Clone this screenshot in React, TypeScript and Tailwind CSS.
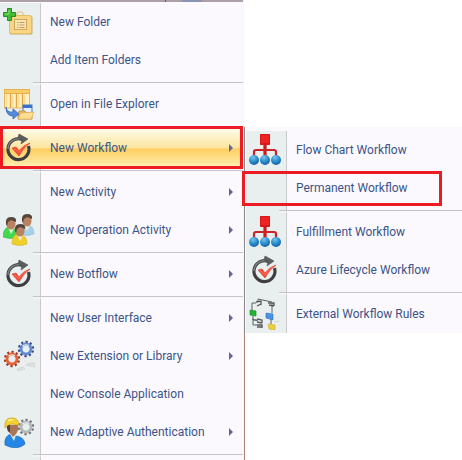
import type { ReactNode } from 'react';

type Item = {
  label: string;
  icon?: ReactNode;
  arrow?: boolean;
  active?: boolean;
  marked?: boolean;
};

type Entry = Item | 'separator';

function Icon({ children }: { children: ReactNode }) {
  return (
    <svg viewBox="0 0 32 32" className="size-8" aria-hidden="true">
      {children}
    </svg>
  );
}

function FolderAddIcon() {
  return (
    <Icon>
      <path d="M14 11V8q0-2 2-2h2q2 0 2 2v3" fill="none" stroke="#e3cfa0" strokeWidth="1.500" />
      <rect x="6.500" y="10" width="23" height="18.500" rx="1.500" fill="#c9a868" />
      <rect x="6.500" y="9.500" width="22" height="18" rx="1.500" fill="#f8d684" stroke="#e6bd68" />
      <rect x="11.500" y="13.500" width="12" height="10" fill="#fbe6b0" stroke="#cfa564" />
      <path d="M14 16.500h1.500m1 0h5m-7.500 2.500h1.500m1 0h5m-7.500 2.500h1.500m1 0h5" stroke="#c09a66" strokeWidth="1" />
      <path d="M4.500 2.500h4v4h4v4h-4v4h-4v-4h-4v-4h4z" fill="#43bb35" stroke="#1f8f2a" />
      <path d="M6 4v4H2" fill="none" stroke="#8add74" strokeWidth="1" />
    </Icon>
  );
}

function ExplorerIcon() {
  return (
    <Icon>
      <rect x="1.500" y="1.500" width="25" height="18.500" fill="#fff0c9" stroke="#e6b861" />
      <rect x="1.500" y="1.500" width="25" height="4" fill="#f9cc67" stroke="#e6b04d" />
      <path d="M7.500 6v14m6-14v14m6-14v14" stroke="#dda647" strokeWidth="1.300" />
      <path d="M3.500 6v13m6-13v13m6-13v13m6-13v13" stroke="#fbdc91" strokeWidth="1.500" />
      <rect x="20" y="17" width="9" height="8" fill="#e6f0ff" stroke="#447bc2" />
      <path d="M20 18.500h9" stroke="#3674cc" strokeWidth="3" />
      <path d="M16 23h6l1 2h6v6H15z" fill="#f3bb5c" stroke="#c99143" />
      <path d="m18 25 13-1-3 7H15z" fill="#ffdd91" stroke="#e0ad59" strokeWidth=".700" />
      <path d="M3 19q1 6 7 5v-3l6 5-6 5v-3Q3 28 3 19z" fill="#568bd9" stroke="#3165b2" strokeWidth=".800" />
    </Icon>
  );
}

function CycleIcon() {
  return (
    <Icon>
      <path d="M21.500 8.500A10.500 10.500 0 1 0 25.500 14" fill="none" stroke="#3d3f43" strokeWidth="3.200" />
      <path d="M17.500 6.800A10.500 10.500 0 0 0 5 17" fill="none" stroke="#8a8e90" strokeWidth="1.200" />
      <path d="m16 2 9 5-7 5 1-4-4-2z" fill="#5a5f5e" stroke="#4d5253" strokeWidth=".600" />
      <path d="m9 16 4-1 3 4q4-6 11-8-7 5-11 13z" fill="#f34b37" stroke="#d63a2d" strokeWidth=".600" />
      <path d="m11 16.500 5 4q3-6 8-8" fill="none" stroke="#ff826b" strokeWidth=".700" />
    </Icon>
  );
}

function Person({ x, y, color, dark }: { x: number; y: number; color: string; dark: string }) {
  return (
    <g transform={`translate(${x} ${y})`}>
      <path d="M0 20q0-8 5-10l4 1q6 1 6 9-7 3-15 0z" fill={color} stroke={dark} strokeWidth=".600" />
      <path d="m5 10 3 7 3-6-3-2z" fill="#f3eee4" />
      <ellipse cx="8" cy="7" rx="4.500" ry="5.500" fill="#b98260" />
      <path d="M3 7Q2 0 8 0q6 0 5 5l-5-2-3 2-1 4z" fill="#54463c" />
    </g>
  );
}

function PeopleIcon() {
  return (
    <Icon>
      <Person x={16} y={0} color="#a6d2e9" dark="#8fbcd4" />
      <Person x={0} y={3} color="#42d94f" dark="#35bd43" />
      <Person x={9} y={10} color="#f0ce27" dark="#d8b322" />
    </Icon>
  );
}

function Gear({ x, y, color, dark }: { x: number; y: number; color: string; dark: string }) {
  return (
    <g transform={`translate(${x} ${y}) rotate(12)`}>
      <circle r="7" fill="none" stroke={dark} strokeWidth="2.400" strokeDasharray="2.200 2.198" />
      <circle r="5" fill="none" stroke={color} strokeWidth="2.800" />
      <path d="M-4-2Q-2-5 2-4" fill="none" stroke="#edf3fa" strokeWidth="1.200" />
    </g>
  );
}

function GearsIcon() {
  return (
    <Icon>
      <path d="m14 29 6-2 2 2-7 2zm9-4 4-2h5v4z" fill="#e2e2e0" stroke="#c9cacb" strokeWidth=".600" />
      <Gear x={23} y={9} color="#648bd1" dark="#3c4b83" />
      <Gear x={9} y={19} color="#e66132" dark="#9b3932" />
    </Icon>
  );
}

function WorkerIcon() {
  return (
    <Icon>
      <Gear x={23} y={11} color="#b3b7b7" dark="#6d7173" />
      <path d="M2 29q-1-9 6-11l5 2q8 1 9 8-8 7-20 1z" fill="#2587e5" stroke="#1765bd" strokeWidth=".700" />
      <path d="m7 18 4 7 2-6z" fill="#ddecf9" />
      <path d="M6 9h9q1 5-2 9l-3 3-3-4z" fill="#ac7655" />
      <path d="M4 9h3v8q-4-3-3-8z" fill="#50402f" />
      <path d="M2 12Q1 2 8 2q7-1 8 7l-7-1q-4 0-7 4z" fill="#f4d12e" stroke="#caa21d" strokeWidth=".700" />
      <path d="M5 5q2-2 5-1" fill="none" stroke="#fff18e" strokeWidth="1.500" />
    </Icon>
  );
}

function ChartIcon() {
  return (
    <Icon>
      <defs>
        <radialGradient id="node" cx=".4" cy=".25" r=".8">
          <stop stopColor="#78c5ed" />
          <stop offset=".55" stopColor="#298bc9" />
          <stop offset="1" stopColor="#125b9e" />
        </radialGradient>
      </defs>
      <path d="M16 9v14" stroke="#d0181d" strokeWidth="3.200" />
      <path d="M5 24v-6q0-2 2-2h18q2 0 2 2v6" fill="none" stroke="#c8242a" strokeWidth="2.200" />
      <rect x="11" y="0" width="10" height="11" rx=".700" fill="#d5161b" />
      <rect x="12" y="1" width="8" height="8" fill="#ef241f" />
      <circle cx="5" cy="26" r="5" fill="url(#node)" />
      <circle cx="16" cy="26" r="5" fill="url(#node)" />
      <circle cx="27" cy="26" r="5" fill="url(#node)" />
    </Icon>
  );
}

function RulesIcon() {
  return (
    <Icon>
      <path d="M3 14V5h4M9 3V1l14 3M4 18v9h4m-4-5h4m15-17v10m-1 5v6M3 21l6 2" fill="none" stroke="#5d6367" strokeWidth="1" />
      <path d="m7 4 5-1v4M8 8l4-2m7-1 6 0v3m-5-1 5 1M8 21l5 1v3m-5-1 5 1M8 27h5v3m-5-1h5" fill="none" stroke="#53585b" strokeWidth="1.300" />
      <path d="m1 12 6 1v5l-6-1z" fill="#20b635" stroke="#1b842c" strokeWidth=".600" />
      <path d="m17 15 7 1v6l-7-2z" fill="#4b91e5" stroke="#2d71bd" strokeWidth=".600" />
      <path d="m19 26 7 1v5l-6-1z" fill="#efcd36" stroke="#cfae33" strokeWidth=".600" />
      <path d="m25 24 5-1" stroke="#d2d5d6" />
    </Icon>
  );
}

const mainMenu: Entry[] = [
  { label: 'New Folder', icon: <FolderAddIcon /> },
  { label: 'Add Item Folders' },
  'separator',
  { label: 'Open in File Explorer', icon: <ExplorerIcon /> },
  'separator',
  { label: 'New Workflow', icon: <CycleIcon />, arrow: true, active: true },
  'separator',
  { label: 'New Activity', arrow: true },
  { label: 'New Operation Activity', icon: <PeopleIcon />, arrow: true },
  'separator',
  { label: 'New Botflow', icon: <CycleIcon />, arrow: true },
  'separator',
  { label: 'New User Interface', arrow: true },
  { label: 'New Extension or Library', icon: <GearsIcon />, arrow: true },
  { label: 'New Console Application' },
  { label: 'New Adaptive Authentication', icon: <WorkerIcon />, arrow: true },
  'separator',
];

const workflowMenu: Entry[] = [
  { label: 'Flow Chart Workflow', icon: <ChartIcon /> },
  { label: 'Permanent Workflow', marked: true },
  'separator',
  { label: 'Fulfillment Workflow', icon: <ChartIcon /> },
  { label: 'Azure Lifecycle Workflow', icon: <CycleIcon /> },
  'separator',
  { label: 'External Workflow Rules', icon: <RulesIcon /> },
];

function Separator() {
  return (
    <li role="separator" className="flex h-1.5 shrink-0">
      <span className="w-[33px] bg-[#e9eeef]" />
      <span className="flex flex-1 flex-col">
        <span className="h-[3px] w-2 border-r border-[#c9c9cc] bg-[#e9eeef]" />
        <span className="h-px bg-[#c6c4c9]" />
        <span className="h-0.5 w-2 border-r border-[#dddde0] bg-[#f3f4f6]" />
      </span>
    </li>
  );
}

function MenuItem({ item }: { item: Item }) {
  return (
    <li className="relative shrink-0">
      <button
        type="button"
        role="menuitem"
        aria-haspopup={item.arrow ? 'menu' : undefined}
        aria-expanded={item.arrow ? Boolean(item.active) : undefined}
        className={
          item.active
            ? 'flex h-[38px] w-full items-center bg-[linear-gradient(#fffbe6,#fce5a0_50%,#fdcf62_52%,#fedd84_75%,#fff0b4)] text-left'
            : 'flex h-[38px] w-full items-center text-left'
        }
      >
        <span
          className={
            item.active
              ? 'flex h-full w-[41px] items-center pl-[3px]'
              : 'flex h-full w-[41px] items-center border-r border-[#c9c9cc] bg-[#e9eeef] pl-[3px]'
          }
        >
          {item.icon}
        </span>
        <span className="flex-1 pl-[9px] whitespace-nowrap">{item.label}</span>
        {item.arrow && (
          <svg viewBox="0 0 5 8" className="mr-[9px] h-2 w-[5px]" aria-hidden="true">
            <path d="M0 0v8l4-4z" fill="#6664a0" />
          </svg>
        )}
      </button>
      {item.active && (
        <span className="pointer-events-none absolute inset-x-0 -top-[3px] -bottom-0.5 border-[3px] border-[#ed1c24]" />
      )}
      {item.marked && (
        <span className="pointer-events-none absolute top-0.5 right-5 bottom-px -left-1 border-[3px] border-[#ed1c24]" />
      )}
    </li>
  );
}

function MenuList({ entries, label }: { entries: Entry[]; label: string }) {
  return (
    <ul role="menu" aria-label={label} className="flex flex-col bg-[#fbf9fd]">
      {entries.map((entry, i) =>
        entry === 'separator' ? <Separator key={i} /> : <MenuItem key={i} item={entry} />,
      )}
    </ul>
  );
}

export default function App() {
  return (
    <div className="flex h-screen overflow-hidden bg-white font-[Roboto,'Open_Sans',sans-serif] text-xs text-[#3b5488]">
      <div className="flex w-[243px] shrink-0 flex-col bg-[#fbf9fd]">
        <div className="flex h-0.5 shrink-0 bg-[#aaa0a5]">
          <span className="ml-[165px] w-px bg-[#625b60]" />
          <span className="ml-4 w-5 bg-[#8794b4]" />
        </div>
        <div className="pt-px">
          <MenuList entries={mainMenu} label="Item actions" />
        </div>
        <div className="flex-1">
          <div className="h-full w-[41px] border-r border-[#c9c9cc] bg-[#e9eeef]" />
        </div>
      </div>
      <div className="w-px shrink-0 bg-[#f8f4f9]" />
      <div className="flex min-w-0 flex-1 flex-col pt-[127px]">
        <div className="border-l border-[#89878a] bg-[#fbf9fd] pt-1 pl-px">
          <MenuList entries={workflowMenu} label="New Workflow" />
        </div>
        <div className="flex-1 border-l border-[#a98474]" />
      </div>
    </div>
  );
}
